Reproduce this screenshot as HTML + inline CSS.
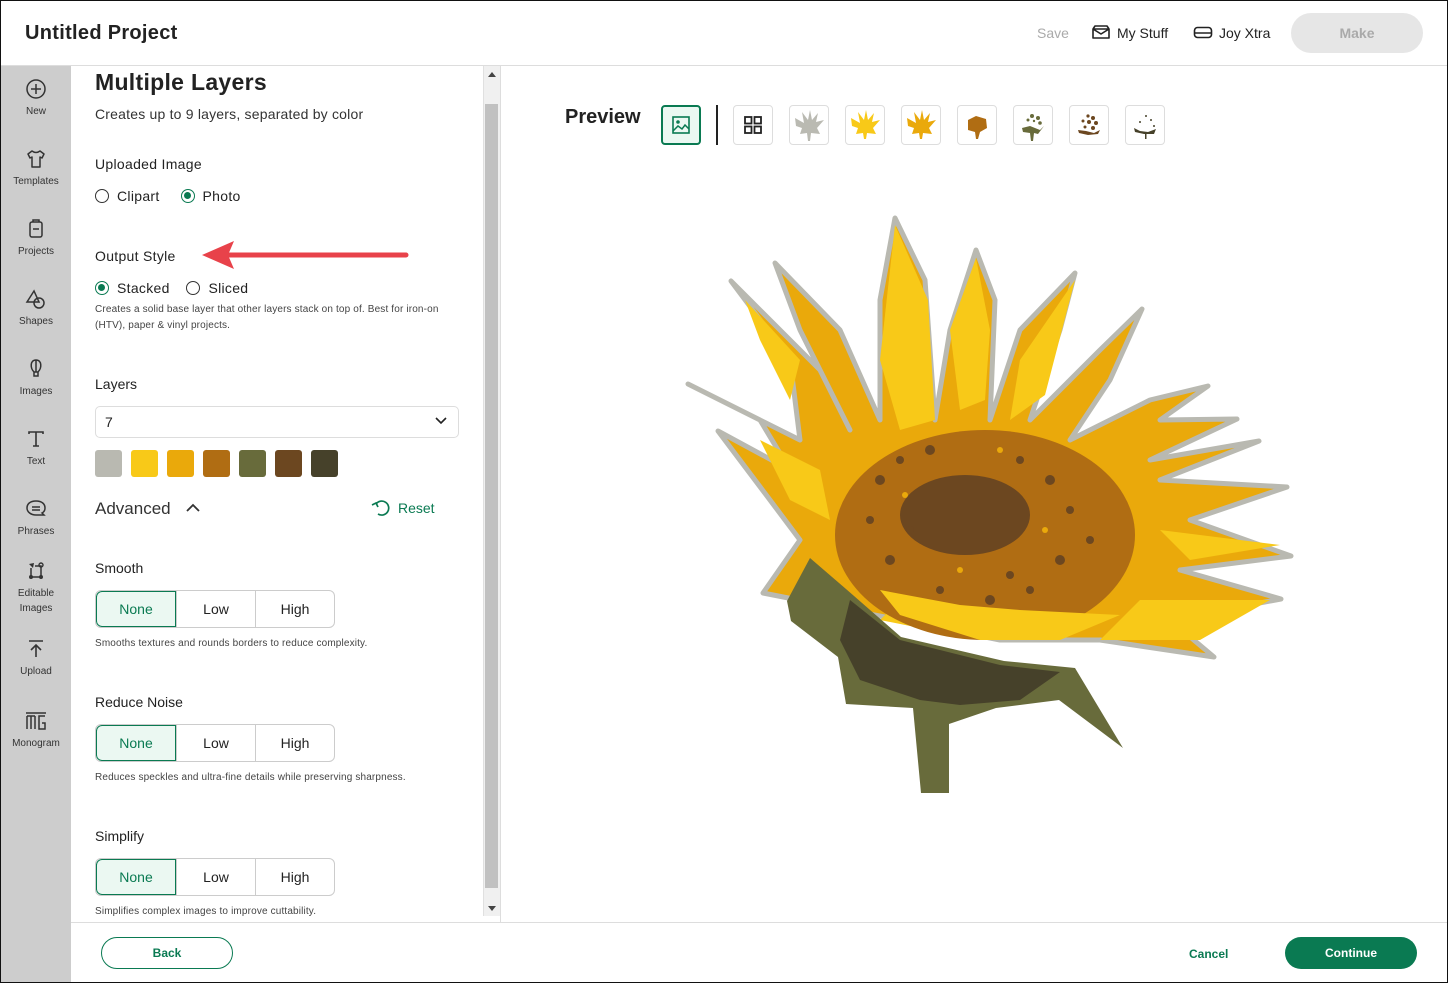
<!DOCTYPE html>
<html><head><meta charset="utf-8"><style>
*{box-sizing:border-box;margin:0;padding:0}
body{width:1448px;height:983px;overflow:hidden;font-family:"Liberation Sans",sans-serif;color:#222;background:#fff;position:relative}
.a{position:absolute}
.frame{left:0;top:0;width:1448px;height:983px;border:1px solid #111;z-index:10;pointer-events:none}
.side{left:1px;top:66px;width:70px;height:917px;background:#cdcdcd}
.nav{position:absolute;left:0;width:70px;text-align:center;font-size:10px;color:#333;line-height:15px}
.nav svg{display:block;margin:0 auto 4px}
.lbl{font-size:14px;color:#222}
.seg{position:absolute;left:95px;width:240px;height:38px;display:flex;border:1px solid #ccc;border-radius:6px;overflow:hidden}
.seg div{flex:1;display:flex;align-items:center;justify-content:center;font-size:14px;border-left:1px solid #ccc}
.seg div:first-child{border:1px solid #0a7a52;background:#ebf8f2;color:#0a7a52;border-radius:6px 0 0 6px}
.help{font-size:10px;color:#444;line-height:16px;letter-spacing:0.15px}
.rad{display:inline-block;width:14px;height:14px;border:1.5px solid #333;border-radius:50%;vertical-align:-2px;margin-right:8px;position:relative}
.rad.on{border-color:#0a7a52}
.rad.on:after{content:"";position:absolute;left:2px;top:2px;width:7px;height:7px;border-radius:50%;background:#0a7a52}
.th{position:absolute;top:105px;width:40px;height:40px;border:1px solid #ddd;border-radius:4px}
</style></head><body>
<div class="a frame"></div>
<div class="a" style="left:0;top:0;width:1448px;height:66px;border-bottom:1px solid #ddd"></div>
<div class="a" style="left:25px;top:22px;font-size:20px;font-weight:bold;color:#222;letter-spacing:0.3px">Untitled Project</div>
<div class="a" style="left:1037px;top:25px;font-size:14px;color:#aaa">Save</div>
<svg class="a" style="left:1091px;top:24px" width="20" height="16" viewBox="0 0 20 16"><path d="M2 5 L2 14 L18 14 L18 5 Z M2 5 L4 2 L16 2 L18 5 M2 5 L10 10 L18 5" fill="none" stroke="#222" stroke-width="1.6" stroke-linejoin="round"/></svg>
<div class="a" style="left:1117px;top:25px;font-size:14px;color:#222">My Stuff</div>
<svg class="a" style="left:1193px;top:26px" width="20" height="13" viewBox="0 0 20 13"><rect x="1.5" y="1.5" width="17" height="10" rx="3" fill="none" stroke="#222" stroke-width="1.6"/><path d="M1.5 7 H18.5" stroke="#222" stroke-width="1.6"/></svg>
<div class="a" style="left:1219px;top:25px;font-size:14px;color:#222">Joy Xtra</div>
<div class="a" style="left:1291px;top:13px;width:132px;height:40px;border-radius:20px;background:#e6e6e6;color:#aaa;font-size:14px;font-weight:bold;text-align:center;line-height:40px">Make</div>
<div class="a side">
 <div class="nav" style="top:12px"><svg width="22" height="22" viewBox="0 0 22 22"><circle cx="11" cy="11" r="9" fill="none" stroke="#333" stroke-width="1.5"/><path d="M11 6V16M6 11H16" stroke="#333" stroke-width="1.5"/></svg>New</div>
 <div class="nav" style="top:82px"><svg width="22" height="22" viewBox="0 0 22 22"><path d="M7 3 L3 6 L5 10 L7 9 L7 19 L15 19 L15 9 L17 10 L19 6 L15 3 Q11 6 7 3Z" fill="none" stroke="#333" stroke-width="1.5" stroke-linejoin="round"/></svg>Templates</div>
 <div class="nav" style="top:152px"><svg width="22" height="22" viewBox="0 0 22 22"><rect x="5" y="4" width="12" height="15" rx="2" fill="none" stroke="#333" stroke-width="1.5"/><path d="M8 4V2H14V4M8 11h6" stroke="#333" stroke-width="1.5" fill="none"/></svg>Projects</div>
 <div class="nav" style="top:222px"><svg width="22" height="22" viewBox="0 0 22 22"><path d="M9 3 L2 14 H14 Z" fill="none" stroke="#333" stroke-width="1.5"/><circle cx="14" cy="15" r="5" fill="none" stroke="#333" stroke-width="1.5"/></svg>Shapes</div>
 <div class="nav" style="top:292px"><svg width="22" height="22" viewBox="0 0 22 22"><path d="M11 2 C5 2 5 10 9 14 H13 C17 10 17 2 11 2Z M9 14 V18 H13 V14 M11 2 V14" fill="none" stroke="#333" stroke-width="1.5"/></svg>Images</div>
 <div class="nav" style="top:362px"><svg width="22" height="22" viewBox="0 0 22 22"><path d="M4 6V4H18V6M11 4V18M8 18H14" fill="none" stroke="#333" stroke-width="1.6"/></svg>Text</div>
 <div class="nav" style="top:432px"><svg width="22" height="22" viewBox="0 0 22 22"><path d="M11 3 C5 3 2 6 2 10 C2 14 6 17 11 17 H19 L17 15 C19 14 20 12 20 10 C20 6 17 3 11 3Z M7 9H15M7 12H15" fill="none" stroke="#333" stroke-width="1.5"/></svg>Phrases</div>
 <div class="nav" style="top:494px"><svg width="22" height="22" viewBox="0 0 22 22"><path d="M4 4 L9 3 L8 8Z" fill="#333"/><path d="M6 8V17H16V6H10" fill="none" stroke="#333" stroke-width="1.5"/><circle cx="16" cy="5" r="2" fill="none" stroke="#333" stroke-width="1.4"/><circle cx="6" cy="17" r="2" fill="#333"/><circle cx="16" cy="17" r="2" fill="#333"/></svg>Editable<br>Images</div>
 <div class="nav" style="top:572px"><svg width="22" height="22" viewBox="0 0 22 22"><path d="M4 3H18M11 7V19M6 12L11 7L16 12" fill="none" stroke="#333" stroke-width="1.6"/></svg>Upload</div>
 <div class="nav" style="top:644px"><svg width="24" height="22" viewBox="0 0 24 22"><path d="M2 3H22M3 6V19M7 6V19M11 6V19M3 6H11M21 6H15V19H21V13H18" fill="none" stroke="#333" stroke-width="1.5"/></svg>Monogram</div>
</div>
<div class="a" style="left:500px;top:66px;width:1px;height:856px;background:#ddd"></div>
<div class="a" style="left:483px;top:66px;width:17px;height:850px;background:#f0f0f0;border-left:1px solid #e0e0e0"></div>
<div class="a" style="left:485px;top:104px;width:13px;height:784px;background:#c1c1c1"></div>
<div class="a" style="left:488px;top:72px;width:0;height:0;border:4px solid transparent;border-bottom:5px solid #444;border-top:0"></div>
<div class="a" style="left:488px;top:906px;width:0;height:0;border:4px solid transparent;border-top:5px solid #444;border-bottom:0"></div>

<div class="a" style="left:95px;top:69px;font-size:23px;font-weight:bold;color:#222;letter-spacing:0.3px">Multiple Layers</div>
<div class="a" style="left:95px;top:106px;font-size:14px;color:#333;letter-spacing:0.2px">Creates up to 9 layers, separated by color</div>
<div class="a lbl" style="left:95px;top:156px;letter-spacing:0.3px">Uploaded Image</div>
<div class="a" style="left:95px;top:188px;font-size:14px;letter-spacing:0.3px"><span class="rad"></span>Clipart &nbsp;&nbsp;&nbsp;&nbsp;<span class="rad on"></span>Photo</div>
<div class="a lbl" style="left:95px;top:248px;letter-spacing:0.3px">Output Style</div>
<svg class="a" style="left:198px;top:238px" width="215" height="34" viewBox="0 0 215 34"><path d="M18 17 H208" stroke="#e8424a" stroke-width="5" stroke-linecap="round"/><path d="M4 17 L36 3 L30 17 L36 31Z" fill="#e8424a"/></svg>
<div class="a" style="left:95px;top:280px;font-size:14px;letter-spacing:0.3px"><span class="rad on"></span>Stacked &nbsp;&nbsp;&nbsp;<span class="rad"></span>Sliced</div>
<div class="a help" style="left:95px;top:302px;width:360px">Creates a solid base layer that other layers stack on top of. Best for iron-on (HTV), paper &amp; vinyl projects.</div>
<div class="a lbl" style="left:95px;top:376px">Layers</div>
<div class="a" style="left:95px;top:406px;width:364px;height:32px;border:1px solid #ddd;border-radius:5px;font-size:14px;padding:7px 0 0 9px">7</div>
<svg class="a" style="left:435px;top:417px" width="12" height="8" viewBox="0 0 12 8"><path d="M1 1L6 6L11 1" fill="none" stroke="#222" stroke-width="1.6"/></svg>
<div class="a" style="left:95px;top:450px;display:flex;gap:9px">
<div style="width:27px;height:27px;border-radius:3px;background:#b9b9b1"></div><div style="width:27px;height:27px;border-radius:3px;background:#f8c918"></div><div style="width:27px;height:27px;border-radius:3px;background:#eaa90b"></div><div style="width:27px;height:27px;border-radius:3px;background:#b06d13"></div><div style="width:27px;height:27px;border-radius:3px;background:#686b3b"></div><div style="width:27px;height:27px;border-radius:3px;background:#6c4720"></div><div style="width:27px;height:27px;border-radius:3px;background:#46412a"></div></div>
<div class="a" style="left:95px;top:499px;font-size:17px;color:#333">Advanced</div>
<svg class="a" style="left:185px;top:502px" width="16" height="10" viewBox="0 0 16 10"><path d="M2 9L8 3L14 9" fill="none" stroke="#333" stroke-width="1.8"/></svg>
<svg class="a" style="left:371px;top:498px" width="20" height="20" viewBox="0 0 20 20"><path d="M5 6 A7 7 0 1 1 7 16" fill="none" stroke="#0a7a52" stroke-width="1.7"/><path d="M1 7 L5 5 L7 9" fill="none" stroke="#0a7a52" stroke-width="1.7"/></svg>
<div class="a" style="left:398px;top:500px;font-size:14px;color:#0a7a52">Reset</div>
<div class="a lbl" style="left:95px;top:560px">Smooth</div>
<div class="seg" style="top:590px"><div>None</div><div>Low</div><div>High</div></div>
<div class="a help" style="left:95px;top:636px">Smooths textures and rounds borders to reduce complexity.</div>
<div class="a lbl" style="left:95px;top:694px">Reduce Noise</div>
<div class="seg" style="top:724px"><div>None</div><div>Low</div><div>High</div></div>
<div class="a help" style="left:95px;top:770px">Reduces speckles and ultra-fine details while preserving sharpness.</div>
<div class="a lbl" style="left:95px;top:828px">Simplify</div>
<div class="seg" style="top:858px"><div>None</div><div>Low</div><div>High</div></div>
<div class="a help" style="left:95px;top:904px">Simplifies complex images to improve cuttability.</div>
<div class="a" style="left:71px;top:922px;width:1377px;height:61px;background:#fff;border-top:1px solid #ddd"></div>
<div class="a" style="left:101px;top:937px;width:132px;height:32px;border:1.5px solid #0a7a52;border-radius:16px;text-align:center;line-height:30px;font-size:12px;font-weight:bold;color:#0a7a52">Back</div>
<div class="a" style="left:1189px;top:947px;font-size:12px;font-weight:bold;color:#0a7a52">Cancel</div>
<div class="a" style="left:1285px;top:937px;width:132px;height:32px;border-radius:16px;background:#0a7a52;text-align:center;line-height:33px;font-size:12px;font-weight:bold;color:#fff">Continue</div>
<div class="a" style="left:565px;top:106px;font-size:20px;font-weight:bold;color:#222">Preview</div>
<div class="th" style="left:661px;border:2px solid #0a7a52;background:#ebf8f2"><svg width="36" height="36" viewBox="0 0 36 36"><rect x="10" y="10" width="16" height="16" fill="none" stroke="#0a7a52" stroke-width="1.6"/><circle cx="15" cy="15" r="1.8" fill="#0a7a52"/><path d="M10 24 L15 19 L19 22 L22 18 L26 22" fill="none" stroke="#0a7a52" stroke-width="1.5"/></svg></div>
<div class="a" style="left:716px;top:105px;width:2px;height:40px;background:#222"></div>
<div class="th" style="left:733px"><svg width="38" height="38" viewBox="0 0 38 38"><g fill="none" stroke="#222" stroke-width="1.8"><rect x="11" y="11" width="6.5" height="6.5"/><rect x="20.5" y="11" width="6.5" height="6.5"/><rect x="11" y="20.5" width="6.5" height="6.5"/><rect x="20.5" y="20.5" width="6.5" height="6.5"/></g></svg></div>
<div class="th" style="left:789px"><svg width="38" height="38" viewBox="0 0 38 38"><path d="M5 12 L14 17 L12 6 L18 14 L20 4 L22 14 L28 7 L26 16 L34 14 L27 22 L30 28 L21 27 L20 35 L18 35 L17 27 L10 28 L12 22 L6 20Z" fill="#babab2"/></svg></div>
<div class="th" style="left:845px"><svg width="38" height="38" viewBox="0 0 38 38"><path d="M5 12 L14 17 L12 6 L18 14 L20 4 L22 14 L28 7 L26 16 L34 14 L27 22 L30 28 L21 27 L20 33 L18 33 L17 27 L10 28 L12 22 L6 20Z" fill="#f8c918"/></svg></div>
<div class="th" style="left:901px"><svg width="38" height="38" viewBox="0 0 38 38"><path d="M5 12 L14 17 L12 6 L18 14 L20 4 L22 14 L28 7 L26 16 L34 14 L27 22 L30 28 L21 27 L20 33 L18 33 L17 27 L10 28 L12 22 L6 20Z" fill="#eaa90b"/></svg></div>
<div class="th" style="left:957px"><svg width="38" height="38" viewBox="0 0 38 38"><path d="M10 14 L18 10 L28 13 L29 22 L22 26 L20 33 L18 33 L17 26 L10 24Z" fill="#b06d13"/></svg></div>
<div class="th" style="left:1013px"><svg width="38" height="38" viewBox="0 0 38 38"><path d="M8 22 L16 20 L26 24 L30 20 L24 28 L20 27 L19 35 L17 35 L16 27 L9 26Z" fill="#686b3b"/><g fill="#686b3b"><circle cx="18" cy="10" r="2"/><circle cx="24" cy="12" r="2"/><circle cx="14" cy="14" r="1.5"/><circle cx="26" cy="17" r="1.8"/><circle cx="20" cy="15" r="1.2"/></g></svg></div>
<div class="th" style="left:1069px"><svg width="38" height="38" viewBox="0 0 38 38"><g fill="#6c4720"><circle cx="18" cy="10" r="1.6"/><circle cx="23" cy="12" r="2"/><circle cx="13" cy="15" r="1.5"/><circle cx="26" cy="17" r="2"/><circle cx="19" cy="16" r="2"/><circle cx="15" cy="21" r="1.5"/><circle cx="23" cy="22" r="2"/><path d="M8 24 L16 25 L24 27 L30 24 L28 28 L18 29 L9 27Z"/></g></svg></div>
<div class="th" style="left:1125px"><svg width="38" height="38" viewBox="0 0 38 38"><g fill="#46412a"><circle cx="20" cy="10" r="1"/><circle cx="25" cy="14" r="1"/><circle cx="14" cy="16" r="1"/><circle cx="28" cy="20" r="1"/><path d="M8 22 L14 25 L22 26 L30 23 L28 28 L18 28 L9 26Z"/><rect x="19" y="28" width="1.5" height="5"/></g></svg></div>

<svg class="a" style="left:0;top:0" width="1448" height="983" viewBox="0 0 1448 983">
<path d="M763,593 L800,540 L770,500 L718,431 L790,470 L760,420 L688,384 L800,440 L790,360 L731,281 L820,370 L850,430 L800,330 L775,263 L840,330 L880,420 L880,300 L895,218 L925,280 L935,420 L950,330 L976,250 L995,300 L990,420 L1020,330 L1075,273 L1060,330 L1030,420 L1100,350 L1142,309 L1110,380 L1070,440 L1150,400 L1208,386 L1160,420 L1237,419 L1150,460 L1259,441 L1160,480 L1287,487 L1190,520 L1291,556 L1180,570 L1281,599 L1170,620 L1214,657 L1100,640 L1000,640 L900,620 Z" fill="#eaa90b" stroke="#b9b9b1" stroke-width="5" stroke-linejoin="round"/>
<path d="M895,225 L928,300 L935,420 L900,430 L880,360Z M976,258 L990,330 L985,400 L960,410 L950,330Z M1075,280 L1020,360 L1010,420 L1045,395Z M760,440 L820,470 L830,520 L790,500Z M1140,600 L1270,600 L1200,640 L1100,640Z M900,600 L1000,630 L980,640 L880,620Z M1160,530 L1280,545 L1190,560Z M745,300 L800,360 L790,400 L760,340Z" fill="#f8c918"/>
<ellipse cx="985" cy="535" rx="150" ry="105" fill="#b06d13"/>
<ellipse cx="965" cy="515" rx="65" ry="40" fill="#6c4720"/>
<g fill="#6c4720">
<circle cx="880" cy="480" r="5"/><circle cx="900" cy="460" r="4"/><circle cx="930" cy="450" r="5"/><circle cx="1020" cy="460" r="4"/><circle cx="1050" cy="480" r="5"/><circle cx="1070" cy="510" r="4"/><circle cx="1060" cy="560" r="5"/><circle cx="1030" cy="590" r="4"/><circle cx="990" cy="600" r="5"/><circle cx="940" cy="590" r="4"/><circle cx="890" cy="560" r="5"/><circle cx="870" cy="520" r="4"/><circle cx="1090" cy="540" r="4"/><circle cx="1010" cy="575" r="4"/><circle cx="910" cy="530" r="4"/></g>
<g fill="#eaa90b"><circle cx="905" cy="495" r="3"/><circle cx="1045" cy="530" r="3"/><circle cx="960" cy="570" r="3"/><circle cx="1000" cy="450" r="3"/></g>
<path d="M787,601 L810,558 L846,589 L901,637 L1004,661 L1075,668 L1123,748 L1059,700 L996,708 L949,724 L949,793 L921,793 L913,708 L846,704 L838,657 L791,621Z" fill="#686b3b"/>
<path d="M850,600 L900,640 L1000,665 L1060,672 L1020,700 L960,705 L920,700 L860,680 L840,640Z" fill="#46412a"/>
<path d="M880,590 L960,605 L1020,610 L1120,615 L1060,640 L980,640 L900,615Z" fill="#f8c918"/>
</svg>
</body></html>
